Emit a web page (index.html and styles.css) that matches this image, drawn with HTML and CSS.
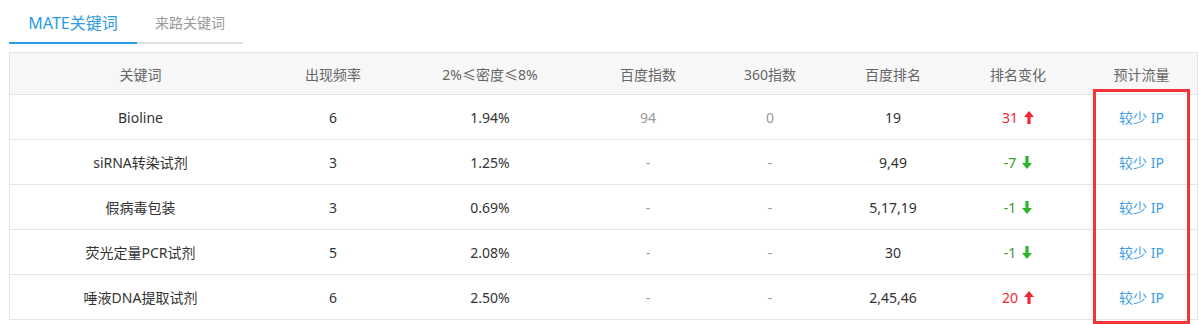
FILE: index.html
```html
<!DOCTYPE html>
<html lang="zh">
<head>
<meta charset="utf-8">
<link rel="stylesheet" href="styles.css">
</head>
<body>
<div class="page">
  <div class="tabs">
    <div class="tab active">MATE关键词</div>
    <div class="tab">来路关键词</div>
  </div>
  <div class="table">
    <div class="row head">
      <div>关键词</div><div>出现频率</div><div>2%≤密度≤8%</div><div>百度指数</div><div>360指数</div><div>百度排名</div><div>排名变化</div><div class="last-col">预计流量</div>
    </div>
    <div class="row">
      <div>Bioline</div><div>6</div><div>1.94%</div><div class="muted">94</div><div class="muted">0</div><div>19</div>
      <div class="up">31<svg class="arrow" viewBox="0 0 10 13"><polygon points="5,0 10,6 6.6,6 6.6,13 3.4,13 3.4,6 0,6"/></svg></div>
      <div class="flow last-col">较少 IP</div>
    </div>
    <div class="row">
      <div>siRNA转染试剂</div><div>3</div><div>1.25%</div><div class="muted">-</div><div class="muted">-</div><div>9,49</div>
      <div class="down">-7<svg class="arrow" viewBox="0 0 10 13"><polygon points="5,13 10,7 6.6,7 6.6,0 3.4,0 3.4,7 0,7"/></svg></div>
      <div class="flow last-col">较少 IP</div>
    </div>
    <div class="row">
      <div>假病毒包装</div><div>3</div><div>0.69%</div><div class="muted">-</div><div class="muted">-</div><div>5,17,19</div>
      <div class="down">-1<svg class="arrow" viewBox="0 0 10 13"><polygon points="5,13 10,7 6.6,7 6.6,0 3.4,0 3.4,7 0,7"/></svg></div>
      <div class="flow last-col">较少 IP</div>
    </div>
    <div class="row">
      <div>荧光定量PCR试剂</div><div>5</div><div>2.08%</div><div class="muted">-</div><div class="muted">-</div><div>30</div>
      <div class="down">-1<svg class="arrow" viewBox="0 0 10 13"><polygon points="5,13 10,7 6.6,7 6.6,0 3.4,0 3.4,7 0,7"/></svg></div>
      <div class="flow last-col">较少 IP</div>
    </div>
    <div class="row">
      <div>唾液DNA提取试剂</div><div>6</div><div>2.50%</div><div class="muted">-</div><div class="muted">-</div><div>2,45,46</div>
      <div class="up">20<svg class="arrow" viewBox="0 0 10 13"><polygon points="5,0 10,6 6.6,6 6.6,13 3.4,13 3.4,6 0,6"/></svg></div>
      <div class="flow last-col">较少 IP</div>
    </div>
  </div>
  <div class="highlight"></div>
</div>
</body>
</html>
```
FILE: styles.css
```css
* { box-sizing: border-box; }
html, body { margin: 0; padding: 0; background: #fff; }
body {
  font-family: "Noto Sans", "Noto Sans CJK SC", sans-serif;
  font-size: 14px;
  color: #333;
}
.page {
  position: relative;
  width: 1199px;
  height: 324px;
  padding-left: 9px;
  overflow: hidden;
}
.tabs {
  display: flex;
  height: 44px;
}
.tab {
  height: 44px;
  display: flex;
  align-items: center;
  justify-content: center;
  border-bottom: 2px solid #e1e1e1;
  color: #999;
  font-size: 14px;
  width: 106px;
  padding-top: 1px;
}
.tab.active {
  width: 128px;
  color: #2a9be6;
  font-size: 16px;
  border-bottom-color: #2a9be6;
}
.table {
  margin-top: 8px;
  width: 1189px;
  border: 1px solid #e5e5e5;
  border-bottom: none;
}
.row {
  display: grid;
  grid-template-columns: 261px 124px 190px 126px 118px 128px 122px 1fr;
  height: 45px;
  border-bottom: 1px solid #e5e5e5;
}
.row > div {
  display: flex;
  align-items: center;
  justify-content: center;
}
.row > .last-col { padding-left: 7px; }
.row.head {
  height: 42px;
  background: #f7f7f7;
  color: #666;
}
.muted { color: #999; }
.up { color: #f5262f; }
.down { color: #3e9a2b; }
.arrow {
  width: 10px;
  height: 13px;
  margin-left: 6px;
  margin-top: 1px;
}
.up .arrow { fill: #f5262f; }
.down .arrow { fill: #2fb52a; }
.flow { color: #3b9ee6; }
.highlight {
  position: absolute;
  left: 1093px;
  top: 89px;
  width: 97px;
  height: 235px;
  border: 3px solid #f5333a;
}
```
